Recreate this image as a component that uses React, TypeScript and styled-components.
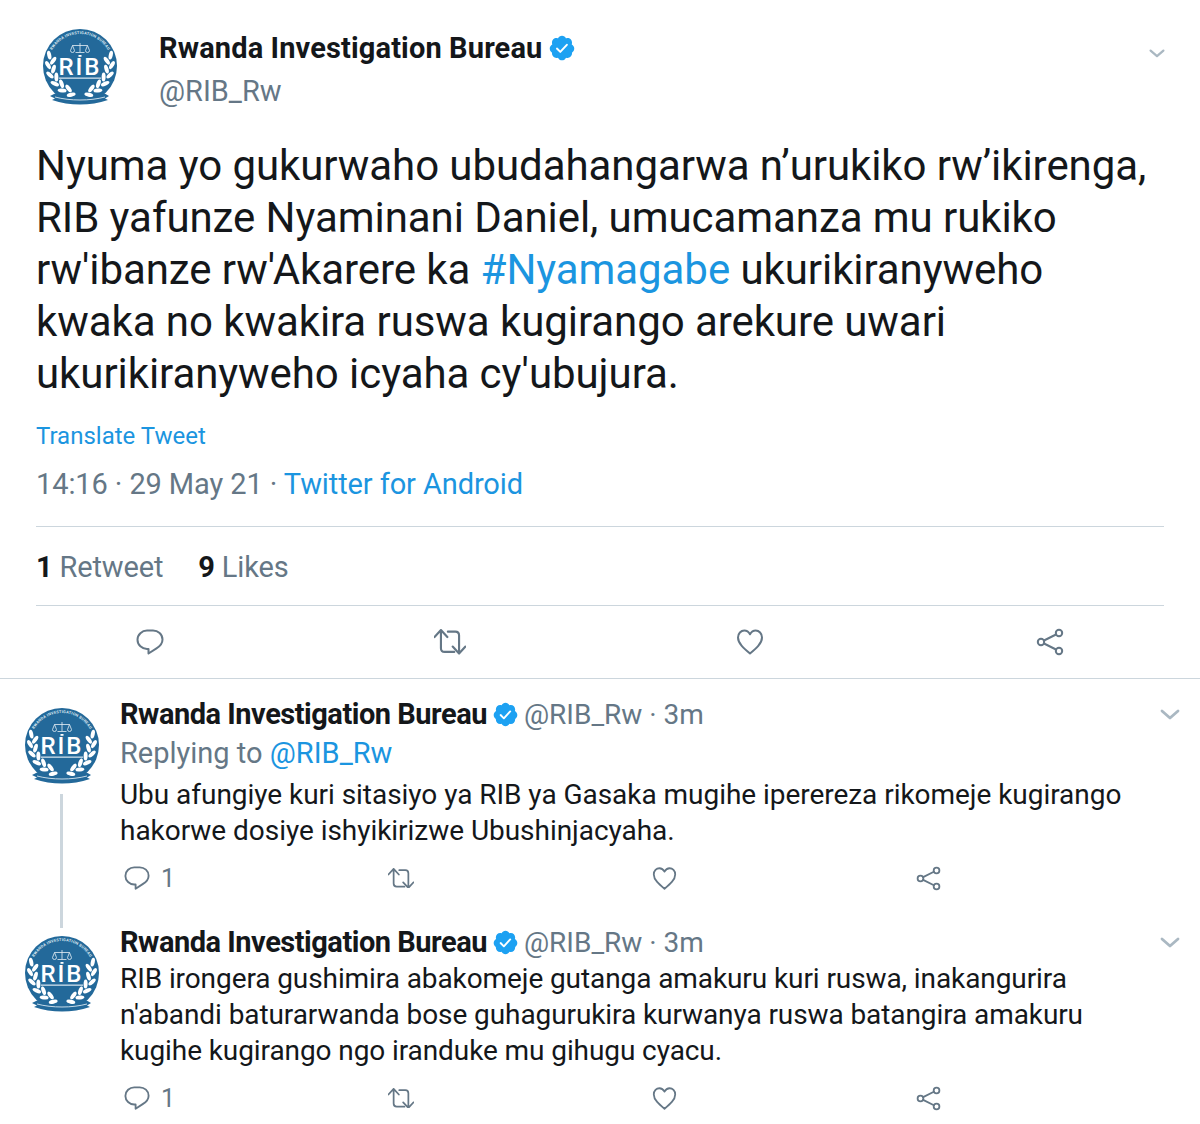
import React from "react";
import styled, { createGlobalStyle } from "styled-components";

const Global = createGlobalStyle`
  html, body { margin: 0; padding: 0; background: #fff; }
  body { font-family: Roboto, "Liberation Sans", sans-serif; color: #14171a; }
`;
const Page = styled.div`width: 1200px; height: 1124px; overflow: hidden; background: #fff;`;
const Main = styled.section`padding: 24px 0 0; border-bottom: 1px solid #ccd6dd; height: 679px; box-sizing: border-box;`;
const Head = styled.header`display: flex; padding: 0 35px 0 42px; height: 88px;`;
const MainAvatarSlot = styled.div`width: 76px; height: 76px; margin-top: 5px; flex: none;`;
const NameBlock = styled.div`margin-left: 41px; flex: 1; display: flex; flex-direction: column;`;
const NameRow = styled.div`display: flex; align-items: center; gap: 6px; height: 48px;`;
const Name = styled.span`font-size: 29px; font-weight: 700; letter-spacing: 0.13px; white-space: nowrap; color: #14171a;`;
const Handle = styled.span`font-size: 28px; color: #657786; white-space: nowrap;`;
const MainHandle = styled(Handle)`font-size: 29px; line-height: 38px;`;
const Body = styled.div`padding: 0 36px;`;
const MainText = styled.p`margin: 28px 0 0; font-size: 42px; line-height: 52px; letter-spacing: -0.07px; white-space: nowrap; color: #14171a;`;
const Link = styled.span`color: #1b95e0;`;
const Translate = styled.div`margin-top: 20px; font-size: 24px; line-height: 32px; color: #1b95e0;`;
const Meta = styled.div`margin-top: 12px; font-size: 29px; line-height: 40px; letter-spacing: -0.1px; color: #657786; padding-bottom: 22px; border-bottom: 1px solid #ccd6dd;`;
const Stats = styled.div`display: flex; gap: 35px; height: 79px; padding-top: 1px; box-sizing: border-box; align-items: center; font-size: 29px; letter-spacing: -0.15px; color: #657786; border-bottom: 1px solid #ccd6dd;`;
const Strong = styled.strong`color: #14171a; font-weight: 700;`;
const MainActions = styled.div`display: grid; grid-template-columns: repeat(4, 300px); height: 72px; align-items: center; justify-items: center;`;
const Reply = styled.article<{ $h: number }>`display: flex; height: ${p => p.$h}px;`;
const Rail = styled.div`width: 96px; margin-left: 24px; flex: none; display: flex; flex-direction: column; align-items: flex-start;`;
const ReplyAvatar = styled.div`width: 76px; height: 76px; margin-top: 29px; flex: none;`;
const RailLine = styled.div`width: 3px; height: 134px; flex: none; margin: 10px 0 0 36px; background: #ccd6dd;`;
const ReplyBody = styled.div`flex: 1; position: relative; padding-top: 16px; min-width: 0;`;
const ReplyHead = styled.div`display: flex; align-items: center; height: 38px; gap: 5px;`;
const ReplyName = styled(Name)`letter-spacing: -0.48px;`;
const ReplyingTo = styled.div`font-size: 29px; line-height: 40px; color: #657786;`;
const ReplyText = styled.p<{ $top: number; $track: number }>`margin: ${p => p.$top}px 0 0; font-size: 28px; line-height: 36px; white-space: nowrap; letter-spacing: ${p => p.$track}px; color: #14171a;`;
const ReplyActions = styled.div`display: grid; grid-template-columns: repeat(4, 264px); margin: 13px 0 0 4px; height: 32px; align-items: center;`;
const Action = styled.div`display: flex; align-items: center; gap: 11px; font-size: 25px; color: #657786;`;
const ChevronSlot = styled.div`position: absolute; top: 30px; right: 20px; display: flex;`;
const MainChevron = styled.div`margin-top: 25px; display: flex; align-items: flex-start;`;

const Chevron = ({ w }: { w: number }) => (
  <svg width={w} height={w * 0.55} viewBox="0 0 20 11" fill="none" stroke="#aab8c2" strokeWidth="2.8" strokeLinecap="round" strokeLinejoin="round"><path d="M2 2l8 7 8-7" /></svg>
);
const Badge = ({ s }: { s: number }) => (
  <svg width={s} height={s} viewBox="0 0 24 24" style={{ flex: "none" }}>
    <path fill="#1da1f2" d="M22.5 12.5c0-1.58-.875-2.95-2.148-3.6.154-.435.238-.905.238-1.4 0-2.21-1.71-3.998-3.818-3.998-.47 0-.92.084-1.336.25C14.818 2.415 13.51 1.5 12 1.5s-2.816.917-3.437 2.25c-.415-.165-.866-.25-1.336-.25-2.11 0-3.818 1.79-3.818 4 0 .494.083.964.237 1.4-1.272.65-2.147 2.018-2.147 3.6 0 1.495.782 2.798 1.942 3.486-.02.17-.032.34-.032.514 0 2.21 1.708 4 3.818 4 .47 0 .92-.086 1.335-.25.62 1.334 1.926 2.25 3.437 2.25 1.512 0 2.818-.916 3.437-2.25.415.163.865.248 1.336.248 2.11 0 3.818-1.79 3.818-4 0-.174-.012-.344-.033-.513 1.158-.687 1.943-1.99 1.943-3.484z" />
    <path fill="#fff" d="M10.54 16.2a.9.9 0 0 1-.6-.25l-2.9-2.87a.85.85 0 0 1 1.2-1.2l2.25 2.24 5.04-5.4a.85.85 0 1 1 1.24 1.16l-5.63 6.04a.85.85 0 0 1-.6.28z" />
  </svg>
);
const strokeProps = { fill: "none", stroke: "#657786", strokeWidth: 2, strokeLinecap: "round" as const, strokeLinejoin: "round" as const };
const ReplyIcon = ({ s }: { s: number }) => (
  <svg width={s} height={s} viewBox="0 0 28 28" {...strokeProps}>
    <path d="M11 2.500h6c5 0 9.500 3.800 9.500 9 0 4-3 7-6 8.800L12.500 25.500v-4.500H11C6 21 1.500 17 1.500 11.800 1.500 6.500 6 2.500 11 2.500z" />
  </svg>
);
const RetweetIcon = ({ s }: { s: number }) => (
  <svg width={s} height={s * 0.8} viewBox="1 1 30 24" {...strokeProps}>
    <path d="M1.500 8.500L7.500 2l6 6.500M7.500 2.500V19c0 2 1.400 3.500 3.500 3.500h9" />
    <path d="M30.500 17.500l-6 6.500-6-6.500M24.500 23.500V7c0-2-1.400-3.500-3.500-3.500h-7" />
  </svg>
);
const HeartIcon = ({ s }: { s: number }) => (
  <svg width={s} height={s} viewBox="0 0 28 28" {...strokeProps}>
    <path d="M14 25.500C8 20.500 2 15.500 2 9.400 2 5.400 5 2.500 8.300 2.500c2.600 0 4.400 1.400 5.700 3.800 1.300-2.400 3.100-3.800 5.700-3.800C23 2.500 26 5.400 26 9.400c0 6.100-6 11.100-12 16.100z" />
  </svg>
);
const ShareIcon = ({ s }: { s: number }) => (
  <svg width={s} height={s} viewBox="0 0 28 28" {...strokeProps}>
    <circle cx="5" cy="14" r="3.200" /><circle cx="23" cy="5" r="3.200" /><circle cx="23" cy="23" r="3.200" />
    <path d="M8 12.500L20 6.500M8 15.500l12 6" />
  </svg>
);

const wreath = [16, 34, 52, 70, 88, 106];
const leafAt = (theta: number, radius: number, lean: number, key: string) => {
  const t = (theta * Math.PI) / 180;
  const x = 38 - radius * Math.sin(t);
  const y = 35 + radius * Math.cos(t);
  return <ellipse key={key} cx={x} cy={y} rx="2" ry="4.500" fill="#fff" transform={`rotate(${theta - 90 + lean} ${x} ${y})`} />;
};
const Logo = ({ id }: { id: string }) => (
  <svg width="76" height="76" viewBox="0 0 76 76" role="img" aria-label="RIB logo">
    <circle cx="38" cy="37" r="37" fill="#23699a" />
    <path d="M8 67 L15 63.500 C28 68 48 68 61 63.500 L67 67 L63 69.500 L66 71 C48 77 28 77 10 71 L13 69.500 z" fill="#23699a" />
    <path d="M13 68 C28 72 48 72 63 68" fill="none" stroke="#d8e6ef" strokeWidth="0.9" />
    <defs><path id={id} d="M10.300 21a32 32 0 0 1 55.400 0" /></defs>
    <text fontFamily="Roboto, sans-serif" fontSize="3.900" fontWeight="700" fill="#dbe8f1" letterSpacing="0.2" textAnchor="middle">
      <textPath href={`#${id}`} startOffset="50%">RWANDA INVESTIGATION BUREAU</textPath>
    </text>
    <g fill="none" stroke="#e6eff5" strokeWidth="0.8">
      <path d="M38 14v9M33.500 23.500h9M30.500 16.500h15" />
      <path d="M28.500 21.500l2-5 2 5a2 2 0 0 1-4 0zM43.500 21.500l2-5 2 5a2 2 0 0 1-4 0z" />
    </g>
    <text x="38" y="46" textAnchor="middle" fontFamily="Roboto, sans-serif" fontSize="24" fontWeight="500" letterSpacing="2" fill="#fff">RIB</text>
    <rect x="36.500" y="26" width="3" height="1.800" fill="#fff" />
    <rect x="17" y="48.500" width="42" height="1.300" fill="#cfe0ec" />
    {[false, true].map(flip => (
      <g key={String(flip)} transform={flip ? "translate(76 0) scale(-1 1)" : undefined}>
        {wreath.map(th => leafAt(th, 32, -28, `o${th}`))}
        {wreath.slice(0, -1).map(th => leafAt(th + 9, 27, 28, `i${th}`))}
      </g>
    ))}
  </svg>
);

const ReplyRow = () => (
  <ReplyActions>
    <Action><ReplyIcon s={26} /><span>1</span></Action>
    <Action><RetweetIcon s={26} /></Action>
    <Action><HeartIcon s={25} /></Action>
    <Action><ShareIcon s={25} /></Action>
  </ReplyActions>
);

const ReplyHeader = () => (
  <ReplyHead>
    <ReplyName>Rwanda Investigation Bureau</ReplyName>
    <Badge s={27} />
    <Handle>@RIB_Rw · 3m</Handle>
  </ReplyHead>
);

export default function App() {
  return (
    <Page>
      <Global />
      <Main>
        <Head>
          <MainAvatarSlot><Logo id="ring-main" /></MainAvatarSlot>
          <NameBlock>
            <NameRow><Name>Rwanda Investigation Bureau</Name><Badge s={28} /></NameRow>
            <MainHandle>@RIB_Rw</MainHandle>
          </NameBlock>
          <MainChevron><Chevron w={16} /></MainChevron>
        </Head>
        <Body>
          <MainText>
            Nyuma yo gukurwaho ubudahangarwa n’urukiko rw’ikirenga,<br />
            RIB yafunze Nyaminani Daniel, umucamanza mu rukiko<br />
            rw'ibanze rw'Akarere ka <Link>#Nyamagabe</Link> ukurikiranyweho<br />
            kwaka no kwakira ruswa kugirango arekure uwari<br />
            ukurikiranyweho icyaha cy'ubujura.
          </MainText>
          <Translate>Translate Tweet</Translate>
          <Meta>14:16 · 29 May 21 · <Link>Twitter for Android</Link></Meta>
          <Stats>
            <span><Strong>1</Strong> Retweet</span>
            <span><Strong>9</Strong> Likes</span>
          </Stats>
        </Body>
        <MainActions>
          <ReplyIcon s={28} /><RetweetIcon s={32} /><HeartIcon s={28} /><ShareIcon s={28} />
        </MainActions>
      </Main>
      <Reply $h={228}>
        <Rail><ReplyAvatar><Logo id="ring-first" /></ReplyAvatar><RailLine /></Rail>
        <ReplyBody>
          <ChevronSlot><Chevron w={20} /></ChevronSlot>
          <ReplyHeader />
          <ReplyingTo>Replying to <Link>@RIB_Rw</Link></ReplyingTo>
          <ReplyText $top={4} $track={-0.04}>Ubu afungiye kuri sitasiyo ya RIB ya Gasaka mugihe iperereza rikomeje kugirango<br />hakorwe dosiye ishyikirizwe Ubushinjacyaha.</ReplyText>
          <ReplyRow />
        </ReplyBody>
      </Reply>
      <Reply $h={217}>
        <Rail><ReplyAvatar><Logo id="ring-second" /></ReplyAvatar></Rail>
        <ReplyBody>
          <ChevronSlot><Chevron w={20} /></ChevronSlot>
          <ReplyHeader />
          <ReplyText $top={0} $track={-0.09}>RIB irongera gushimira abakomeje gutanga amakuru kuri ruswa, inakangurira<br />n'abandi baturarwanda bose guhagurukira kurwanya ruswa batangira amakuru<br />kugihe kugirango ngo iranduke mu gihugu cyacu.</ReplyText>
          <ReplyRow />
        </ReplyBody>
      </Reply>
    </Page>
  );
}
